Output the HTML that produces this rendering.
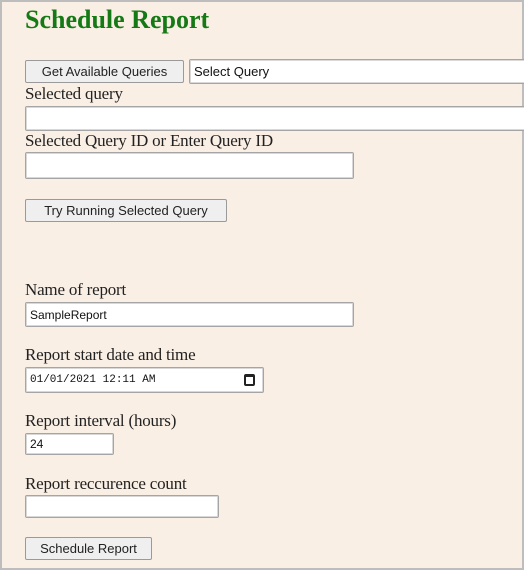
<!DOCTYPE html>
<html><head><style>
*{box-sizing:border-box;margin:0;padding:0}
html,body{width:524px;height:570px;overflow:hidden;background:#faefe5}
#f{position:absolute;left:0;top:0;width:524px;height:570px;border:2px solid #bdbdbd;background:#faefe5}
h1{position:absolute;left:25px;top:5px;font:bold 26px "Liberation Serif",serif;color:#157a15}
.l{position:absolute;left:25px;font:17px "Liberation Serif",serif;color:#222;letter-spacing:-0.2px}
.i{position:absolute;background:#fff;border:1px solid #a5a5a5;border-radius:2px;box-shadow:inset 0 0 0 1px #d8d8d8;font:12px "Liberation Sans",sans-serif;padding-left:4px;display:flex;align-items:center;color:#111}
.b{position:absolute;background:#efefef;border:1px solid #9a9a9a;border-radius:2px;font:13px "Liberation Sans",sans-serif;color:#222;display:flex;align-items:center;justify-content:center}
</style></head><body><div id="f"></div>
<h1>Schedule Report</h1>
<div class="b" style="left:25px;top:60px;width:159px;height:23px">Get Available Queries</div>
<div class="i" style="left:189px;top:59px;width:340px;height:25px;font-size:13px">Select Query</div>
<div class="l" style="top:84px">Selected query</div>
<div class="i" style="left:25px;top:106px;width:504px;height:25px"></div>
<div class="l" style="top:131px">Selected Query ID or Enter Query ID</div>
<div class="i" style="left:25px;top:152px;width:329px;height:27px"></div>
<div class="b" style="left:25px;top:199px;width:202px;height:23px">Try Running Selected Query</div>
<div class="l" style="top:280px">Name of report</div>
<div class="i" style="left:25px;top:302px;width:329px;height:25px">SampleReport</div>
<div class="l" style="top:345px">Report start date and time</div>
<div class="i" style="left:25px;top:367px;width:239px;height:26px;font:11px 'Liberation Mono',monospace">01/01/2021 12:11 AM
<span style="position:absolute;right:8px;top:6px;width:11px;height:12px;border:2px solid #222;border-top-width:3px;border-radius:2px"></span></div>
<div class="l" style="top:411px">Report interval (hours)</div>
<div class="i" style="left:25px;top:433px;width:89px;height:22px">24</div>
<div class="l" style="top:474px">Report reccurence count</div>
<div class="i" style="left:25px;top:495px;width:194px;height:23px"></div>
<div class="b" style="left:25px;top:537px;width:127px;height:23px">Schedule Report</div>
</body></html>
